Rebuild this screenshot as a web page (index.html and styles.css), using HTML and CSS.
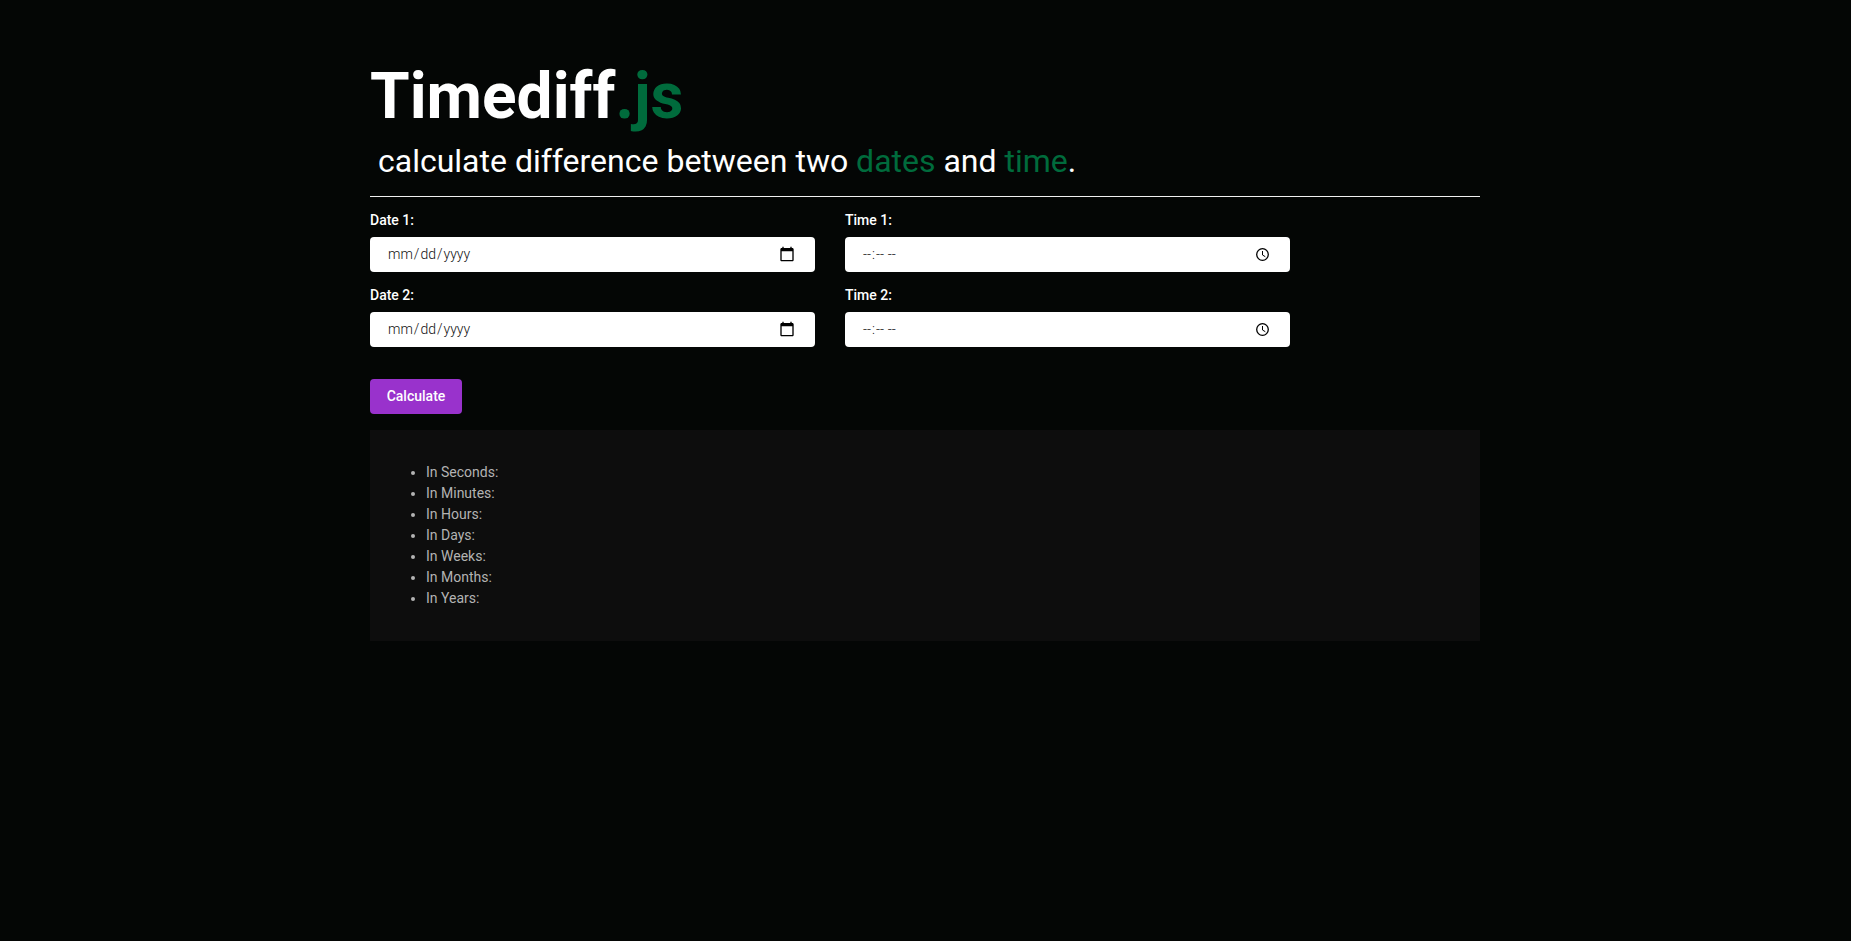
FILE: index.html
```html
<!DOCTYPE html>
<html lang="en">
<head>
<meta charset="utf-8">
<title>Timediff.js</title>
<link rel="stylesheet" href="styles.css">
</head>
<body>
<svg width="0" height="0" class="sprite">
  <symbol id="calendar" viewBox="0 0 24 24"><path d="M20 3h-1V1h-2v2H7V1H5v2H4c-1.100 0-2 .9-2 2v16c0 1.100.9 2 2 2h16c1.100 0 2-.9 2-2V5c0-1.100-.9-2-2-2zm0 18H4V8h16v13z"/></symbol>
  <symbol id="clock" viewBox="0 0 16 16"><circle cx="7.500" cy="7.500" r="5.800" fill="none" stroke="currentColor" stroke-width="1.300"/><path d="M7.500 4v4l2.800 1.700" fill="none" stroke="currentColor" stroke-width="1"/></symbol>
</svg>
<main class="container">
  <h1 class="title">Timediff<span class="accent">.js</span></h1>
  <p class="subtitle">calculate difference between two <span class="accent">dates</span> and <span class="accent">time</span>.</p>
  <hr class="rule">
  <form class="fields">
    <label class="field"><span class="label">Date 1:</span><input class="input" type="date"><svg class="icon date-icon"><use href="#calendar"/></svg></label>
    <label class="field"><span class="label">Time 1:</span><input class="input time" type="time"><svg class="icon time-icon"><use href="#clock"/></svg></label>
    <label class="field"><span class="label">Date 2:</span><input class="input" type="date"><svg class="icon date-icon"><use href="#calendar"/></svg></label>
    <label class="field"><span class="label">Time 2:</span><input class="input time" type="time"><svg class="icon time-icon"><use href="#clock"/></svg></label>
  </form>
  <button class="button" type="button">Calculate</button>
  <section class="results">
    <ul class="list">
      <li>In Seconds:</li>
      <li>In Minutes:</li>
      <li>In Hours:</li>
      <li>In Days:</li>
      <li>In Weeks:</li>
      <li>In Months:</li>
      <li>In Years:</li>
    </ul>
  </section>
</main>
</body>
</html>
```

FILE: styles.css
```css
* { box-sizing: border-box; }
body {
  margin: 0;
  padding-right: 1px;
  background: #040605;
  color: #fff;
  font-family: Roboto, sans-serif;
  font-size: 14px;
  line-height: 21px;
}
.sprite { display: none; }
.container {
  width: 1110px;
  margin: 0 auto;
  padding-top: 58px;
}
.title {
  margin: 0;
  font-size: 64px;
  line-height: 77px;
  font-weight: 700;
}
.accent { color: #006b3c; }
.subtitle {
  margin: 7px 0 15px;
  padding-left: 8px;
  font-size: 32px;
  line-height: 39px;
}
.rule {
  height: 1px;
  margin: 0 0 13px;
  border: 0;
  background: #f0f0f0;
}
.fields {
  display: grid;
  grid-template-columns: 445px 445px;
  gap: 13px 30px;
}
.field {
  display: block;
  position: relative;
}
.label {
  display: block;
  margin-bottom: 6px;
  font-weight: 500;
}
.input {
  display: block;
  width: 100%;
  height: 35px;
  padding: 0 17px;
  border: 0;
  border-radius: 4px;
  background: #fff;
  color: #111;
  font: 300 14px/21px Roboto, sans-serif;
}
.input::-webkit-datetime-edit,
.input::-webkit-datetime-edit-month-field,
.input::-webkit-datetime-edit-day-field,
.input::-webkit-datetime-edit-year-field,
.input::-webkit-datetime-edit-hour-field,
.input::-webkit-datetime-edit-minute-field,
.input::-webkit-datetime-edit-ampm-field { color: #111; }
.time { letter-spacing: 0.25px; color: #000; }
.input::-webkit-calendar-picker-indicator { display: none; }
.icon {
  position: absolute;
  width: 16px;
  height: 16px;
  color: #000;
  pointer-events: none;
}
.date-icon {
  right: 20px;
  bottom: 10px;
}
.time-icon {
  right: 19px;
  bottom: 9px;
}
.button {
  display: block;
  width: 92px;
  height: 35px;
  margin: 32px 0 16px;
  padding: 0;
  border: 0;
  border-radius: 4px;
  background: #9932cc;
  color: #fff;
  font: 500 14px/21px Roboto, sans-serif;
}
.results {
  height: 211px;
  padding: 32px 16px;
  background: #0d0d0d;
  color: #b3b3b3;
}
.list {
  margin: 0;
  padding-left: 40px;
}
```
